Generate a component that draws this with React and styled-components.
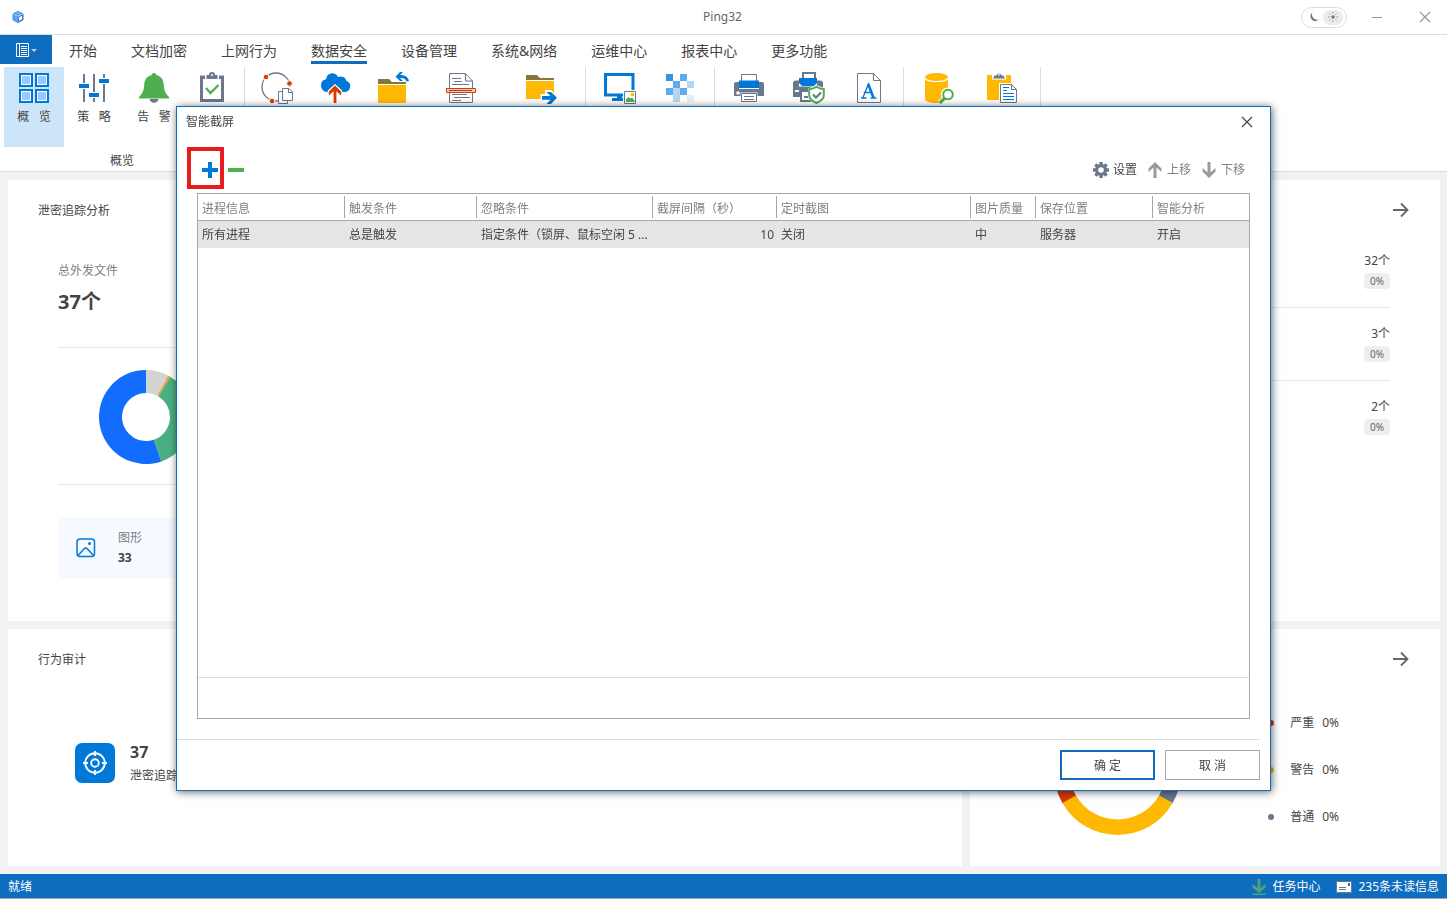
import React from "react";
import styled, { createGlobalStyle, css } from "styled-components";

const BLUE = "#0f6dbf";
const ACCENT = "#0078d7";
const SLATE = "#69788c";
const GREEN = "#4caf50";
const AMBER = "#ffb902";
const RUST = "#da3b01";
const INK = "#444";
const MUTED = "#808080";

const GlobalStyle = createGlobalStyle`
  *, *::before, *::after { box-sizing: border-box; }
  body {
    margin: 0;
    color: ${INK};
    background: #f2f2f2;
    font: 12px/16px "Noto Sans", "Noto Sans CJK SC", sans-serif;
  }
  button {
    margin: 0;
    padding: 0;
    border: 0;
    background: none;
    color: inherit;
    font: inherit;
  }
  h1, h2, p, ul { margin: 0; padding: 0; font-size: inherit; font-weight: inherit; }
  ul { list-style: none; }
  svg { display: block; flex: none; }
`;

/* ---------- shell ---------- */

const Shell = styled.div`
  display: flex;
  flex-direction: column;
  min-height: 100vh;
`;

const TitleBar = styled.header`
  display: grid;
  grid-template-columns: 1fr auto 1fr;
  align-items: center;
  height: 35px;
  padding: 0 14px 0 12px;
  background: #fff;
  border-bottom: 1px solid #ddd;
`;

const AppTitle = styled.h1`
  color: #666;
`;

const TitleActions = styled.div`
  display: flex;
  align-items: center;
  justify-content: flex-end;
  gap: 22px;
`;

const WindowButtons = styled.div`
  display: flex;
  gap: 32px;
`;

const ThemeSwitch = styled.button`
  display: flex;
  align-items: center;
  justify-content: space-between;
  width: 46px;
  height: 21px;
  padding: 0 3px 0 7px;
  border: 1px solid #ddd;
  border-radius: 11px;
`;

const SwitchKnob = styled.span`
  display: grid;
  place-items: center;
  width: 20px;
  height: 15px;
  border-radius: 8px;
  background: #ebebed;
`;

const WindowButton = styled.button`
  display: grid;
  place-items: center;
  width: ${(p) => p.$width || 16}px;
  height: 16px;
`;

/* ---------- ribbon ---------- */

const TabRow = styled.nav`
  display: flex;
  height: 32px;
  background: #fff;
`;

const FileButton = styled.button`
  display: flex;
  align-items: center;
  justify-content: center;
  gap: 1px;
  width: 52px;
  height: 29px;
  background: ${BLUE};
`;

const TabButton = styled.button`
  height: 29px;
  padding: 0 17px;
  font-size: 14px;
  line-height: 20px;
  white-space: nowrap;
`;

const TabText = styled.span`
  display: block;
  height: 29px;
  padding-top: 6px;
  border-bottom: 3px solid ${(p) => (p.$active ? BLUE : "transparent")};
`;

const Ribbon = styled.div`
  display: flex;
  background: #fff;
  border-bottom: 1px solid #ddd;
`;

const RibbonGroup = styled.section`
  display: flex;
  flex-direction: column;
  padding: 0 4px;
  border-right: 1px solid #ddd;
`;

const RibbonButtons = styled.div`
  display: flex;
`;

const RibbonButton = styled.button`
  display: flex;
  flex-direction: column;
  align-items: center;
  gap: 5px;
  width: ${(p) => p.$width || 60}px;
  height: 80px;
  padding-top: 5px;
  background: ${(p) => (p.$active ? "#cce5f8" : "transparent")};
`;

const RibbonLabel = styled.span`
  white-space: pre;
`;

const GroupLabel = styled.p`
  height: 24px;
  padding-top: 6px;
  text-align: center;
`;

/* ---------- dashboard ---------- */

const Dashboard = styled.main`
  flex: 1;
  display: grid;
  grid-template-columns: 954fr 470fr;
  grid-template-rows: 441fr 237fr;
  gap: 8px;
  padding: 8px 7px 8px 8px;
`;

const Card = styled.section`
  padding: 22px 30px 0;
  background: #fff;
`;

const CardHead = styled.div`
  display: flex;
  align-items: center;
  justify-content: ${(p) => (p.$end ? "flex-end" : "flex-start")};
  height: 16px;
`;

const CardTitle = styled.h2`
  padding-top: 2px;
`;

const Indented = styled.div`
  padding: 0 20px;
`;

const StatLabel = styled.p`
  padding-top: 45px;
  color: ${MUTED};
`;

const StatValue = styled.p`
  padding-bottom: 22px;
  border-bottom: 1px solid #e6e6e6;
  font-size: 20px;
  font-weight: 700;
  line-height: 46px;
`;

const DonutArea = styled.div`
  height: 137px;
  padding: 22px 0 0 41px;
  border-bottom: 1px solid #e6e6e6;
`;

const FileTile = styled.div`
  display: flex;
  align-items: center;
  gap: 22px;
  width: 270px;
  height: 62px;
  margin-top: 32px;
  padding-left: 18px;
  background: #f6f9ff;
`;

const TileText = styled.p`
  line-height: 20px;
  color: ${(p) => (p.$strong ? INK : MUTED)};
  font-weight: ${(p) => (p.$strong ? 700 : 400)};
`;

const AuditItem = styled.div`
  display: flex;
  align-items: center;
  gap: 15px;
  padding: 71px 0 0 37px;
`;

const AuditIcon = styled.div`
  display: grid;
  place-items: center;
  width: 40px;
  height: 40px;
  border-radius: 7px;
  background: ${ACCENT};
`;

const AuditText = styled.div`
  padding-top: 2px;
  line-height: 24px;
`;

const AuditCount = styled.p`
  font-size: 16px;
  font-weight: 700;
`;

const RankList = styled.ul`
  padding: 17px 20px 0;
`;

const RankRow = styled.li`
  display: flex;
  flex-direction: column;
  align-items: flex-end;
  gap: 4px;
  height: 73px;
  padding-top: 18px;
  border-bottom: ${(p) => (p.$last ? 0 : "1px solid #e6e6e6")};
`;

const Badge = styled.span`
  width: 26px;
  height: 16px;
  border-radius: 4px;
  background: #eee;
  color: #666;
  font-size: 10px;
  text-align: center;
`;

const LevelArea = styled.div`
  display: flex;
  align-items: center;
  justify-content: flex-end;
  gap: 87px;
  padding: 41px 71px 0 0;
`;

const Legend = styled.ul`
  display: grid;
  gap: 31px;
  padding-bottom: 4px;
`;

const LegendItem = styled.li`
  display: flex;
  align-items: center;
  gap: 8px;
`;

const Dot = styled.span`
  width: 6px;
  height: 6px;
  margin-right: 8px;
  border-radius: 50%;
  background: ${(p) => p.$color};
`;

/* ---------- status bar ---------- */

const StatusBar = styled.footer`
  display: flex;
  align-items: center;
  justify-content: space-between;
  height: 25px;
  padding: 2px 8px 0;
  background: ${BLUE};
  border-bottom: 1px solid #a6a6a6;
  color: #fff;
`;

const StatusActions = styled.div`
  display: flex;
  gap: 16px;
`;

const StatusButton = styled.button`
  display: flex;
  align-items: center;
  gap: 6px;
`;

/* ---------- dialog ---------- */

const Overlay = styled.div`
  position: fixed;
  inset: 0;
  display: flex;
  align-items: center;
  justify-content: center;
  padding-bottom: 2px;
`;

const Dialog = styled.div`
  display: flex;
  flex-direction: column;
  width: 1095px;
  max-width: 100%;
  min-height: 685px;
  border: 1px solid ${BLUE};
  background: #fff;
  box-shadow: 1px 1px 8px rgba(0, 0, 0, 0.6);
`;

const DialogHead = styled.div`
  display: flex;
  align-items: center;
  justify-content: space-between;
  height: 30px;
  padding: 0 17px 0 9px;
`;

const Toolbar = styled.div`
  display: flex;
  align-items: center;
  justify-content: space-between;
  height: 56px;
  padding: 10px 25px 0;
`;

const ToolGroup = styled.div`
  display: flex;
  align-items: center;
  gap: ${(p) => p.$gap}px;
`;

const IconButton = styled.button`
  position: relative;
  display: block;
  width: 16px;
  height: 16px;
`;

const Highlight = styled.span`
  position: absolute;
  top: -15px;
  left: -15px;
  width: 37px;
  height: 42px;
  border: 4px solid #e81b1e;
  pointer-events: none;
`;

const ToolButton = styled.button`
  display: flex;
  align-items: center;
  gap: ${(p) => (p.$muted ? 5 : 4)}px;
  color: ${(p) => (p.$muted ? MUTED : INK)};
`;

const GridPanel = styled.div`
  flex: 1;
  display: flex;
  flex-direction: column;
  margin: 0 20px;
  border: 1px solid #a6a6a6;
`;

const GridTable = styled.table`
  width: 100%;
  border-collapse: separate;
  border-spacing: 0;
  table-layout: fixed;
`;

const Col = styled.col`
  width: ${(p) => p.$width}px;
`;

const HeadCell = styled.th`
  height: 27px;
  padding: 0;
  border-bottom: 1px solid #a6a6a6;
  color: ${MUTED};
  font-weight: 400;
  text-align: left;
  white-space: nowrap;
`;

const HeadText = styled.span`
  display: block;
  padding: 5px 0 1px 4px;
  ${(p) =>
    !p.$last &&
    css`
      border-right: 1px solid #a6a6a6;
    `}
`;

const BodyCell = styled.td`
  height: 27px;
  padding: 0 3px 0 4px;
  overflow: hidden;
  background: #e5e5e5;
  text-align: ${(p) => (p.$numeric ? "right" : "left")};
  text-overflow: ellipsis;
  white-space: nowrap;
`;

const GridFooter = styled.div`
  height: 41px;
  margin-top: auto;
  border-top: 1px solid #ddd;
`;

const DialogFoot = styled.div`
  display: flex;
  justify-content: flex-end;
  gap: 10px;
  margin: 20px 10px 10px 0;
  padding-top: 10px;
  border-top: 1px solid #ddd;
`;

const DialogButton = styled.button`
  width: 95px;
  height: 30px;
  padding-top: 2px;
  border: ${(p) => (p.$primary ? `2px solid ${BLUE}` : "1px solid #a6a6a6")};
  background: #fff;
`;

/* ---------- icons ---------- */

const Icon = ({ w = 32, h = w, children, ...rest }) => (
  <svg width={w} height={h} viewBox={`0 0 ${w} ${h}`} fill="none" aria-hidden="true" {...rest}>
    {children}
  </svg>
);

const LogoIcon = () => (
  <Icon w={12}>
    <path d="M6 .5 11 3v6L6 11.500 1 9V3Z" fill="#a9cff8" stroke="#3c86e4" />
    <path d="M1 3 6 5.500v6L1 9Z" fill="#5a9ff0" />
    <path d="M3 2.200 6 4l3-1.800M6 .5v2" stroke="#3c86e4" />
    <path d="M6.500 6 10.500 4v4.500l-4 2Z" fill="#fff" stroke="#2468c8" strokeWidth=".9" />
  </Icon>
);

const MoonIcon = () => (
  <Icon w={10}>
    <path d="M3.400.5A4.700 4.700 0 1 0 9.600 7.500 5.200 5.200 0 0 1 3.400.5Z" fill="#777" />
  </Icon>
);

const SunIcon = () => (
  <Icon w={10}>
    <circle cx="5" cy="5" r="1.800" fill="#777" />
    <path d="M5 0v1.500M5 8.500V10M0 5h1.500M8.500 5H10M1.500 1.500l1 1M7.500 7.500l1 1M1.500 8.500l1-1M7.500 2.500l1-1" stroke="#888" strokeWidth=".9" />
  </Icon>
);

const MinimizeIcon = () => (
  <Icon w={10}>
    <path d="M0 5.500h10" stroke="#999" />
  </Icon>
);

const CloseIcon = ({ color = "#999" }) => (
  <Icon w={12}>
    <path d="m1 1 10 10M11 1 1 11" stroke={color} strokeWidth="1.200" />
  </Icon>
);

const FileMenuIcon = () => (
  <>
    <Icon w={14}>
      <path d="M.5.5h12v13H.5ZM3.500.5v13M5 3.500h6M5 5.500h6M5 7.500h6M5 9.500h6M5 11.500h6" stroke="#fff" />
    </Icon>
    <Icon w={6}>
      <path d="M0 2h6L3 5Z" fill="#b7d3ec" />
    </Icon>
  </>
);

const OverviewIcon = () => (
  <Icon>
    {[[2, 2], [18, 2], [2, 18], [18, 18]].map(([x, y]) => (
      <g key={`${x}-${y}`}>
        <rect x={x} y={y} width="12" height="12" fill="#fff" stroke={ACCENT} strokeWidth="2" />
        <rect x={x + 2} y={y + 2} width="8" height="8" fill="#99c9ff" />
      </g>
    ))}
  </Icon>
);

const PolicyIcon = () => (
  <Icon>
    <path d="M6 2v9M6 17v13M16 2v18M16 26v4M26 2v4M26 12v18" stroke={SLATE} strokeWidth="2" />
    <path d="M1 12h10v4H1zM11 21h10v4H11zM21 7h10v4H21z" fill={ACCENT} />
  </Icon>
);

const AlertIcon = () => (
  <Icon>
    <path d="M11.500 27h9a4.600 4.600 0 0 1-9 0Z" fill={SLATE} />
    <path d="M16 1c-1.500 0-2.400 1-2.600 2.300C8.600 4.300 6.500 8 6.200 13c-.3 5-1 7.500-5.200 12v1.500h30V25c-4.200-4.500-4.900-7-5.200-12-.3-5-2.400-8.700-7.200-9.700C18.400 2 17.500 1 16 1Z" fill={GREEN} />
  </Icon>
);

const ChecklistIcon = () => (
  <Icon>
    <path d="M4 3.500h24V30H4Z" fill={SLATE} />
    <path d="M7 7h18v20H7Z" fill="#fff" />
    <path d="M9 2h14v6H9Z" fill="#fff" />
    <path d="M10.500 3H13a3 3 0 0 1 6 0h2.500v4h-11Z" fill={SLATE} />
    <circle cx="16" cy="3" r="1" fill="#fff" />
    <path d="m10 16 4.500 5 8-8" stroke={GREEN} strokeWidth="2.400" />
  </Icon>
);

const TraceIcon = () => (
  <Icon>
    <circle cx="15" cy="15" r="14" stroke={SLATE} strokeWidth="1.300" />
    <path d="M17 15h16v18H17Z" fill="#fff" />
    <g fill={RUST} stroke="#fff" strokeWidth="1">
      <circle cx="5" cy="5" r="2.800" />
      <circle cx="28.500" cy="11.500" r="2.800" />
      <circle cx="11" cy="29" r="2.800" />
    </g>
    <path d="M17.500 19.500h9v12h-9Z" fill="#fff" stroke={SLATE} />
    <path d="M21.500 16.500h6.500l3.500 3.500v8.500h-10Z" fill="#fff" stroke={SLATE} />
    <path d="M27.500 16.500V20.500h4" stroke={SLATE} />
  </Icon>
);

const CloudUploadIcon = () => (
  <Icon>
    <path d="M8 20a6.500 6.500 0 0 1-1-12.800A7 7 0 0 1 13 1.200c3 0 5 1.500 6.200 3.800A6 6 0 0 1 27.500 9 5.700 5.700 0 0 1 25 20Z" fill={ACCENT} />
    <path d="M16 12 8.800 18.500V25L14 21v10h4V21l5.200 4v-6.500Z" fill="#fff" />
    <path d="M16 13.500 9.800 19.500v4l4.800-4.200V31h2.800V19.300l4.800 4.200v-4Z" fill={RUST} />
  </Icon>
);

const Folder = ({ y = 7 }) => (
  <>
    <path d={`M1 ${y}h11l3 3h14v2H1Z`} fill="#857541" />
    <path d={`M1 ${y + 6}h28v18H1Z`} fill={AMBER} />
  </>
);

const FolderRestoreIcon = () => (
  <Icon>
    <Folder y={7} />
    <path d="M18.500 4.500 23 0h3l-3 3c5 0 8 2 9 6l-2.500.500C28.500 7 27 6 23 6l3 3h-3Z" fill={ACCENT} />
  </Icon>
);

const FolderSendIcon = () => (
  <Icon>
    <Folder y={3} />
    <path d="M15.500 22H20v-4h6l6 6v8h-12v-4h-4.500Z" fill="#fff" />
    <path d="M17 24h8.500l-4-4H26l6 5.700-6 6.300h-4.500l4-4.300H17Z" fill={ACCENT} />
  </Icon>
);

const DocumentScanIcon = () => (
  <Icon>
    <path d="M4.500 1.500h16l7 7.500v21.500h-23Z" fill="#fff" stroke={SLATE} />
    <path d="M20.500 1.500V9h7M7 6.500h9M9 9.500h8M7 12.500h17M7 22.500h15M9 25.500h16M7 28.500h9" stroke={SLATE} />
    <path d="M1.500 16.500h29v4h-29Z" fill="#f8c4b3" stroke={RUST} />
    <path d="M4 18.500h23" stroke="#9b4632" />
  </Icon>
);

const ScreenCaptureIcon = () => (
  <Icon w={32}>
    <path d="M1.500 2.500h27.500v20.500H1.500Z" stroke={ACCENT} strokeWidth="3" />
    <path d="M13 23h5v3h2v3H8v-3h5Z" fill={ACCENT} />
    <path d="M19 18h13v14H19Z" fill="#fff" />
    <path d="M20.500 19.500h11v12h-11Z" fill="#fff" stroke={SLATE} />
    <circle cx="28.500" cy="22.500" r="1.800" fill={AMBER} />
    <path d="m22 30 0-2.500 2.500-2.500 1.500 1.500 2-1 2.500 3V30Z" fill={GREEN} />
  </Icon>
);

const MosaicIcon = () => (
  <Icon>
    <g fill={ACCENT} shapeRendering="crispEdges">
      <path d="M2 2h7v7H2z" opacity=".8" />
      <path d="M16 2h7v7h-7zM9 9h7v7H9zM2 16h7v7H2z" opacity=".62" />
      <path d="M16 16h7v7h-7z" opacity=".62" />
      <path d="M23 9h7v7h-7zM9 23h7v7H9z" opacity=".3" />
      <path d="M9 16h7v7H9z" opacity=".3" />
      <path d="M23 23h7v7h-7z" opacity=".12" />
    </g>
  </Icon>
);

const PrinterShape = () => (
  <>
    <path d="M8.500 2.500h15v8h-15Z" fill="#fff" stroke={SLATE} />
    <path d="M1 12q0-2 2-2h3v7h20v-7h3q2 0 2 2v12H1Z" fill={SLATE} />
    <path d="M6 8.500h20V16H6Z" fill={ACCENT} />
    <circle cx="5" cy="21" r="1.800" fill="#fff" />
    <path d="M7.500 20.500h17v10h-17Z" fill="#fff" />
    <path d="M8.500 21.500h15v8h-15Z" fill="#fff" stroke={SLATE} />
    <path d="M11 24.500h10M11 27.500h10" stroke={SLATE} />
  </>
);

const PrinterIcon = () => (
  <Icon>
    <PrinterShape />
  </Icon>
);

const PrinterShieldIcon = () => (
  <Icon>
    <path d="M9 0h14v8H9Z" fill={SLATE} />
    <path d="M11 2h10v5H11Z" fill="#fff" />
    <path d="M0 11q0-2.500 3-2.500h3v6h18v-6h3q3 0 3 2.500v10H22v9H7v-5H0Z" fill={SLATE} />
    <path d="M6 6h18v5l-3 3H9l-3-3Z" fill={ACCENT} />
    <path d="M2 18h4v2H2zM9 20h8v8H9z" fill="#fff" />
    <path d="M11 24h4v2h-4z" fill={SLATE} />
    <path d="M23.500 13 32 16.500v7c0 4-4 7-8.500 8.500C19 30.500 15 27.500 15 23.500v-7Z" fill="#fff" />
    <path d="M23.500 14.800c2.500 2 4.500 2.300 7.300 2.500v6c0 3.500-3 6-7.300 7.700-4.300-1.700-7.300-4.200-7.300-7.700v-6c2.800-.2 4.800-.5 7.300-2.500Z" stroke={GREEN} strokeWidth="2" />
    <path d="m20 22.500 3 3 5-5" stroke={SLATE} strokeWidth="2.200" />
  </Icon>
);

const FontDocIcon = () => (
  <Icon>
    <path d="M4.500 1.500h16l7 7v22h-23Z" fill="#fff" stroke={SLATE} />
    <path d="M20.500 1.500v7h7" stroke={SLATE} />
    <path d="M8 26h5.500M17.500 26h6M10 25.500l5.800-14.500M10.800 20.500h7.500" stroke={ACCENT} strokeWidth="1.300" />
    <path d="m15.200 12 5.300 13.800" stroke={ACCENT} strokeWidth="2.600" />
  </Icon>
);

const DatabaseSearchIcon = () => (
  <Icon>
    <path d="M2 5v22c0 2.500 5 4 11.500 4 2 0 3.500 0 5-.5L25 20V5Z" fill={AMBER} />
    <ellipse cx="13.500" cy="5" rx="11.500" ry="4" fill={AMBER} />
    <path d="M2 6c1 2.500 5 3.500 11.500 3.500S24 8.500 25 6" stroke="#fff" strokeWidth="1.200" />
    <path d="m17 31 5-5" stroke="#fff" strokeWidth="6" />
    <circle cx="25" cy="22.500" r="7" fill="#fff" />
    <circle cx="25" cy="22.500" r="4.800" stroke={GREEN} strokeWidth="2" />
    <path d="m16.800 31 5-5" stroke={GREEN} strokeWidth="3.200" />
  </Icon>
);

const ClipboardDocIcon = () => (
  <Icon>
    <path d="M0 3h24v25H0Z" fill={AMBER} />
    <path d="M5 2h14v5.500H5Z" fill="#fff" />
    <path d="M5 2h14v1H5ZM5 3h1.500l-1 3.500H5ZM19 3h-1.500l1 3.500h.5Z" fill={AMBER} opacity="0" />
    <path d="M6 6.500 7.500 3.500H9.500a2.600 2.600 0 0 1 5 0h2L18 6.500Z" fill={SLATE} />
    <circle cx="12" cy="2.800" r=".9" fill="#fff" />
    <path d="M12 11h18v20H12Z" fill="#fff" />
    <path d="M13.500 12.500h11l5 5v13h-16Z" fill="#fff" stroke={SLATE} />
    <path d="M24.500 12.500v5h5" stroke={SLATE} />
    <path d="M16 15.500h6M16 18.500h4M16 21.500h11M16 24.500h11M16 27.500h11" stroke={ACCENT} />
  </Icon>
);

const ArrowRightIcon = () => (
  <Icon w={18} h={16}>
    <path d="M1 8h15M9 1.500 15.500 8 9 14.500" stroke="#666" strokeWidth="1.800" />
  </Icon>
);

const PictureIcon = () => (
  <Icon w={20}>
    <rect x="1" y="1" width="17.500" height="17.500" rx="3" stroke={ACCENT} strokeWidth="1.500" />
    <circle cx="13.500" cy="5.500" r="1.500" fill={ACCENT} />
    <path d="m2 17.500 5.700-6.300q2-2.200 4 0l5.800 6.300" stroke={ACCENT} strokeWidth="1.500" />
  </Icon>
);

const TargetIcon = () => (
  <Icon w={24}>
    <g stroke="#fff" strokeWidth="1.900">
      <circle cx="12" cy="12" r="9.800" />
      <circle cx="12" cy="12" r="3.800" />
      <path d="M12 0v5M12 19v5M0 12h5M19 12h5" />
    </g>
  </Icon>
);

const PlusIcon = () => (
  <Icon w={16}>
    <path d="M6 0h4v6h6v4h-6v6H6v-6H0V6h6Z" fill={ACCENT} />
  </Icon>
);

const MinusIcon = () => (
  <Icon w={16}>
    <path d="M0 6h16v4H0Z" fill={GREEN} />
  </Icon>
);

const GearIcon = () => (
  <Icon w={16}>
    <g fill={SLATE}>
      {[0, 45, 90, 135].map((a) => (
        <path key={a} d="M6.300 0h3.400v16H6.300Z" transform={`rotate(${a} 8 8)`} />
      ))}
      <circle cx="8" cy="8" r="6" />
    </g>
    <circle cx="8" cy="8" r="2.800" fill="#fff" />
  </Icon>
);

const MoveIcon = ({ down }) => (
  <Icon w={14} h={16}>
    <path
      d="M7 0 13.500 6.500v3.500L8.500 5.500V16h-3V5.500L.5 10V6.500Z"
      fill="#999"
      transform={down ? "rotate(180 7 8)" : undefined}
    />
  </Icon>
);

const DownloadIcon = () => (
  <Icon w={14} h={16}>
    <path d="M5.500 0h3v9L13.500 5v3.500L7 14 .5 8.500V5l5 4ZM.5 14.500h13V16H.5Z" fill="#4fa27e" />
  </Icon>
);

const MailIcon = () => (
  <Icon w={16} h={14}>
    <path d="M.5 1.500h15v11H.5Z" fill="#fff" stroke={SLATE} />
    <path d="M3 7.500h7M3 9.500h7" stroke={SLATE} />
    <path d="M12 3h2v3h-2Z" fill={ACCENT} />
  </Icon>
);

/* ---------- charts ---------- */

const point = (c, r, deg) => {
  const a = ((deg - 90) * Math.PI) / 180;
  return `${c + r * Math.cos(a)} ${c + r * Math.sin(a)}`;
};

const Donut = ({ size, inner, slices, label }) => {
  const c = size / 2;
  return (
    <svg width={size} height={size} viewBox={`0 0 ${size} ${size}`} role="img" aria-label={label}>
      {slices.map(({ from, to, color }) => {
        const large = to - from > 180 ? 1 : 0;
        return (
          <path
            key={from}
            fill={color}
            d={`M${point(c, c, from)}A${c} ${c} 0 ${large} 1 ${point(c, c, to)}L${point(c, inner, to)}A${inner} ${inner} 0 ${large} 0 ${point(c, inner, from)}Z`}
          />
        );
      })}
    </svg>
  );
};

/* ---------- data ---------- */

const tabs = ["开始", "文档加密", "上网行为", "数据安全", "设备管理", "系统&网络", "运维中心", "报表中心", "更多功能"];

const ribbonGroups = [
  {
    label: "概览",
    items: [
      { icon: OverviewIcon, text: "概   览", active: true },
      { icon: PolicyIcon, text: "策   略" },
      { icon: AlertIcon, text: "告   警" },
      { icon: ChecklistIcon, width: 56 },
    ],
  },
  {
    items: [
      { icon: TraceIcon, width: 56 },
      { icon: CloudUploadIcon },
      { icon: FolderRestoreIcon, width: 56 },
      { icon: DocumentScanIcon, width: 80 },
      { icon: FolderSendIcon, width: 80 },
    ],
  },
  { items: [{ icon: ScreenCaptureIcon }, { icon: MosaicIcon }] },
  { items: [{ icon: PrinterIcon }, { icon: PrinterShieldIcon }, { icon: FontDocIcon }] },
  { items: [{ icon: DatabaseSearchIcon, width: 62 }, { icon: ClipboardDocIcon, width: 66 }] },
];

const fileSlices = [
  { from: 0, to: 28, color: "#d3d3d3" },
  { from: 28, to: 31, color: "#f2a23c" },
  { from: 31, to: 161, color: "#4caf84" },
  { from: 161, to: 360, color: "#126dff" },
];

const levelSlices = [
  { from: 0, to: 120, color: SLATE },
  { from: 120, to: 240, color: AMBER },
  { from: 240, to: 360, color: RUST },
];

const ranks = [
  { count: "32个", share: "0%" },
  { count: "3个", share: "0%" },
  { count: "2个", share: "0%" },
];

const levels = [
  { name: "严重", share: "0%", color: RUST },
  { name: "警告", share: "0%", color: AMBER },
  { name: "普通", share: "0%", color: SLATE },
];

const columns = [
  { title: "进程信息", value: "所有进程", width: 147 },
  { title: "触发条件", value: "总是触发", width: 132 },
  { title: "忽略条件", value: "指定条件（锁屏、鼠标空闲 5 ...", width: 176 },
  { title: "截屏间隔（秒）", value: "10", width: 124, numeric: true },
  { title: "定时截图", value: "关闭", width: 194 },
  { title: "图片质量", value: "中", width: 65 },
  { title: "保存位置", value: "服务器", width: 117 },
  { title: "智能分析", value: "开启", width: 96 },
];

/* ---------- page ---------- */

const CaptureDialog = () => (
  <Overlay>
    <Dialog role="dialog" aria-labelledby="capture-title">
      <DialogHead>
        <h2 id="capture-title">智能截屏</h2>
        <WindowButton $width={12} aria-label="关闭">
          <CloseIcon color="#444" />
        </WindowButton>
      </DialogHead>
      <Toolbar>
        <ToolGroup $gap={10}>
          <IconButton aria-label="添加">
            <PlusIcon />
            <Highlight />
          </IconButton>
          <IconButton aria-label="删除">
            <MinusIcon />
          </IconButton>
        </ToolGroup>
        <ToolGroup $gap={11}>
          <ToolButton><GearIcon />设置</ToolButton>
          <ToolButton $muted><MoveIcon />上移</ToolButton>
          <ToolButton $muted><MoveIcon down />下移</ToolButton>
        </ToolGroup>
      </Toolbar>
      <GridPanel>
        <GridTable>
          <colgroup>
            {columns.map((c) => <Col key={c.title} $width={c.width} />)}
          </colgroup>
          <thead>
            <tr>
              {columns.map((c, i) => (
                <HeadCell key={c.title} scope="col">
                  <HeadText $last={i === columns.length - 1}>{c.title}</HeadText>
                </HeadCell>
              ))}
            </tr>
          </thead>
          <tbody>
            <tr>
              {columns.map((c) => (
                <BodyCell key={c.title} $numeric={c.numeric}>{c.value}</BodyCell>
              ))}
            </tr>
          </tbody>
        </GridTable>
        <GridFooter />
      </GridPanel>
      <DialogFoot>
        <DialogButton $primary>确 定</DialogButton>
        <DialogButton>取 消</DialogButton>
      </DialogFoot>
    </Dialog>
  </Overlay>
);

export default function App() {
  return (
    <>
      <GlobalStyle />
      <Shell>
        <TitleBar>
          <LogoIcon />
          <AppTitle>Ping32</AppTitle>
          <TitleActions>
            <ThemeSwitch aria-label="切换主题">
              <MoonIcon />
              <SwitchKnob><SunIcon /></SwitchKnob>
            </ThemeSwitch>
            <WindowButtons>
              <WindowButton aria-label="最小化"><MinimizeIcon /></WindowButton>
              <WindowButton aria-label="关闭"><CloseIcon /></WindowButton>
            </WindowButtons>
          </TitleActions>
        </TitleBar>
        <TabRow>
          <FileButton aria-label="菜单"><FileMenuIcon /></FileButton>
          {tabs.map((t) => (
            <TabButton key={t}>
              <TabText $active={t === "数据安全"}>{t}</TabText>
            </TabButton>
          ))}
        </TabRow>
        <Ribbon>
          {ribbonGroups.map((group, g) => (
            <RibbonGroup key={g}>
              <RibbonButtons>
                {group.items.map(({ icon: Glyph, text, width, active }, i) => (
                  <RibbonButton key={i} $width={width} $active={active}>
                    <Glyph />
                    {text && <RibbonLabel>{text}</RibbonLabel>}
                  </RibbonButton>
                ))}
              </RibbonButtons>
              <GroupLabel>{group.label}</GroupLabel>
            </RibbonGroup>
          ))}
        </Ribbon>
        <Dashboard>
          <Card>
            <CardHead><CardTitle>泄密追踪分析</CardTitle></CardHead>
            <Indented>
              <StatLabel>总外发文件</StatLabel>
              <StatValue>37个</StatValue>
              <DonutArea>
                <Donut size={94} inner={24} slices={fileSlices} label="总外发文件" />
              </DonutArea>
              <FileTile>
                <PictureIcon />
                <div>
                  <TileText>图形</TileText>
                  <TileText $strong>33</TileText>
                </div>
              </FileTile>
            </Indented>
          </Card>
          <Card>
            <CardHead $end>
              <button aria-label="查看更多"><ArrowRightIcon /></button>
            </CardHead>
            <RankList>
              {ranks.map((r, i) => (
                <RankRow key={r.count} $last={i === ranks.length - 1}>
                  <span>{r.count}</span>
                  <Badge>{r.share}</Badge>
                </RankRow>
              ))}
            </RankList>
          </Card>
          <Card>
            <CardHead><CardTitle>行为审计</CardTitle></CardHead>
            <AuditItem>
              <AuditIcon><TargetIcon /></AuditIcon>
              <AuditText>
                <AuditCount>37</AuditCount>
                <p>泄密追踪</p>
              </AuditText>
            </AuditItem>
          </Card>
          <Card>
            <CardHead $end>
              <button aria-label="查看更多"><ArrowRightIcon /></button>
            </CardHead>
            <LevelArea>
              <Donut size={127} inner={48} slices={levelSlices} label="告警级别" />
              <Legend>
                {levels.map((l) => (
                  <LegendItem key={l.name}>
                    <Dot $color={l.color} />
                    <span>{l.name}</span>
                    <span>{l.share}</span>
                  </LegendItem>
                ))}
              </Legend>
            </LevelArea>
          </Card>
        </Dashboard>
        <StatusBar>
          <span>就绪</span>
          <StatusActions>
            <StatusButton><DownloadIcon />任务中心</StatusButton>
            <StatusButton><MailIcon />235条未读信息</StatusButton>
          </StatusActions>
        </StatusBar>
      </Shell>
      <CaptureDialog />
    </>
  );
}
